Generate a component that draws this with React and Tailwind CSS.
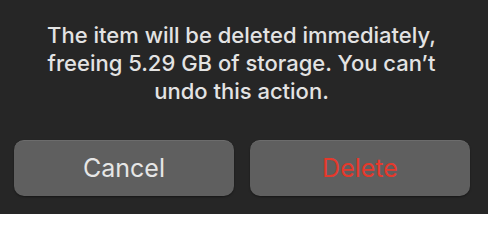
export default function App() {
  return (
    <div
      className="w-[488px] h-[214px] bg-[#262626] flex flex-col overflow-hidden"
      style={{ fontFamily: 'Inter, "Liberation Sans", Arial, sans-serif' }}
    >
      <p className="pt-[21px] pr-[5px] text-center text-[22px] font-medium leading-[28px] text-[#e3e3e3]">
        The item will be deleted immediately,
        <br />
        freeing 5.29 GB of storage. You can’t
        <br />
        undo this action.
      </p>
      <div className="mt-[35px] flex gap-[16px] pl-[14px]">
        <button className="w-[220px] h-[56px] rounded-[10px] bg-[#5f5f5f] border-t border-[#6c6c6c] text-[25px] text-[#e6e6e6] flex items-center justify-center shadow-[0_1px_2px_rgba(0,0,0,0.4)]">
          Cancel
        </button>
        <button className="w-[220px] h-[56px] rounded-[10px] bg-[#5f5f5f] border-t border-[#6c6c6c] text-[25px] text-[#e5392c] flex items-center justify-center shadow-[0_1px_2px_rgba(0,0,0,0.4)]">
          Delete
        </button>
      </div>
    </div>
  );
}
